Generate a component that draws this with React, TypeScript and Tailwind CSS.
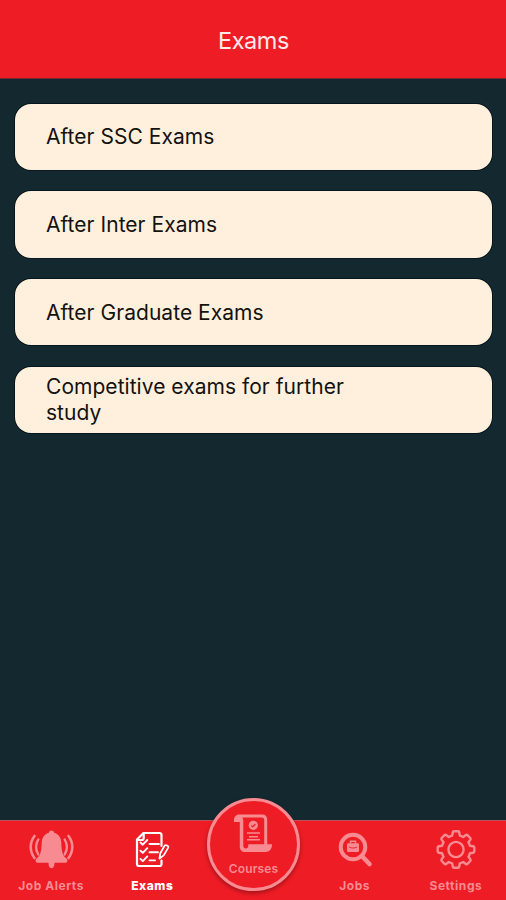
import { useState } from 'react'
import type { ReactNode } from 'react'

const exams = [
  'After SSC Exams',
  'After Inter Exams',
  'After Graduate Exams',
  'Competitive exams for further study',
]

function BellIcon() {
  return (
    <svg width="52" height="44" viewBox="0 0 52 44" fill="none">
      <path
        d="M26.500 3.500c1.500 0 2.300.8 2.600 2.200 4.700 1.300 7 5 7.200 10.100.3 8.200 1 12.800 5.100 15.800 1.600 1.300 1.300 4.200-.9 4.200h-28c-2.200 0-2.500-2.900-.9-4.200 4.100-3 4.800-7.600 5.100-15.800.2-5.100 2.500-8.800 7.200-10.100.3-1.400 1.100-2.200 2.600-2.200Z"
        fill="currentColor"
      />
      <path d="M23.500 35h6c0 4-.8 6.200-3 6.200s-3-2.200-3-6.200Z" fill="currentColor" />
      <path
        d="M9.500 9c-5 6.500-5 15.500 0 22M43.500 9c5 6.500 5 15.500 0 22"
        stroke="currentColor"
        strokeWidth="2.600"
        strokeLinecap="round"
      />
      <path
        d="M13.300 12.500c-2.800 4.700-2.800 10.300 0 15M39.700 12.500c2.800 4.700 2.800 10.300 0 15"
        stroke="currentColor"
        strokeWidth="2.400"
        strokeLinecap="round"
      />
    </svg>
  )
}

function ExamIcon() {
  return (
    <svg
      width="52"
      height="44"
      viewBox="0 0 52 44"
      fill="none"
      stroke="currentColor"
      strokeWidth="2.200"
      strokeLinecap="round"
      strokeLinejoin="round"
    >
      <path d="M35.500 19V8a2 2 0 0 0-2-2H17.500L11 12.500V37a2 2 0 0 0 2 2h20.500a2 2 0 0 0 2-2v-3.500" />
      <path d="M11 13h4.700c1.200 0 2-.8 2-2V6" />
      <path d="m14.500 15.500 2.300 2.200 4.500-4.700M14.500 23.700l2.300 2.200 4.500-4.700M14.500 31.900l2.300 2.200 4.500-4.700" strokeWidth="1.900" />
      <path d="M23.500 17H33M23.500 25.200H32M23.500 33.400H29" strokeWidth="1.900" />
      <path d="m33.500 31.500.8-5.300 4.200-7.300c1.100-1.800 4.600.1 3.600 2l-4.400 7.500Z" strokeWidth="1.800" />
    </svg>
  )
}

function CourseIcon() {
  return (
    <svg width="46" height="44" viewBox="0 0 46 44" fill="none">
      <path
        d="M4 14V12.500C4 9 5.800 6.500 9.300 6.500H32c3.300 0 5.200 1.900 5.200 5.200V37h-3V12c0-1.700-.8-2.500-2.500-2.500H12.200c.8 1 1.100 2.200 1.100 3.700V37.200c0 2.300 1 3.300 2.500 3.300s2.500-1 2.500-3V36.300H42c0 4.800-2.400 7.700-6.500 7.700H15c-3.300 0-5.200-2-5.200-5.500V14Z"
        fill="currentColor"
      />
      <circle cx="23.300" cy="17.300" r="4.600" fill="currentColor" />
      <path d="m21.300 17.300 1.500 1.500 2.600-2.800" stroke="#ee1c25" strokeWidth="1.200" />
      <path d="M17 25h13M19 28.700h9M17 31.700h13" stroke="currentColor" strokeWidth="1.500" />
    </svg>
  )
}

function JobIcon() {
  return (
    <svg width="52" height="44" viewBox="0 0 52 44" fill="none">
      <circle cx="25" cy="20" r="12.300" stroke="currentColor" strokeWidth="4" />
      <path d="m33.800 29 7.700 8" stroke="currentColor" strokeWidth="4.600" strokeLinecap="round" />
      <rect x="19" y="16.200" width="12" height="8.800" rx="1.200" fill="currentColor" />
      <path d="M22.500 16.200v-2h5v2" stroke="currentColor" strokeWidth="1.500" />
      <path d="M21 20c2.500 1.400 5.500 1.400 8 0" stroke="#ee1c25" strokeWidth=".9" />
    </svg>
  )
}

function GearIcon() {
  return (
    <svg
      width="52"
      height="44"
      viewBox="0 0 52 44"
      fill="none"
      stroke="currentColor"
      strokeWidth="2.400"
      strokeLinejoin="round"
    >
      <g transform="translate(27 22.500)">
        <circle r="7.600" />
        <path d="M-3.200-17.200Q-3-18.300-2-18.300H2Q3-18.300 3.200-17.200L3.800-13.900Q5.800-13.300 7.200-12.500L9.900-14.400Q10.800-15 11.500-14.300L14.300-11.500Q15-10.800 14.400-9.900L12.500-7.200Q13.300-5.800 13.900-3.800L17.200-3.200Q18.300-3 18.300-2V2Q18.300 3 17.200 3.200L13.900 3.800Q13.300 5.800 12.500 7.200L14.400 9.900Q15 10.800 14.300 11.500L11.500 14.300Q10.800 15 9.900 14.400L7.200 12.500Q5.800 13.300 3.800 13.900L3.200 17.200Q3 18.300 2 18.300H-2Q-3 18.300-3.200 17.200L-3.800 13.900Q-5.800 13.300-7.200 12.500L-9.900 14.400Q-10.800 15-11.500 14.300L-14.300 11.500Q-15 10.800-14.400 9.900L-12.500 7.200Q-13.300 5.800-13.900 3.800L-17.200 3.200Q-18.300 3-18.300 2V-2Q-18.300-3-17.200-3.200L-13.900-3.800Q-13.300-5.800-12.500-7.200L-14.400-9.900Q-15-10.800-14.300-11.500L-11.500-14.300Q-10.800-15-9.900-14.400L-7.200-12.500Q-5.800-13.300-3.800-13.900Z" />
      </g>
    </svg>
  )
}

interface TabProps {
  label: string
  active: boolean
  onClick: () => void
  children: ReactNode
}

function Tab({ label, active, onClick, children }: TabProps) {
  return (
    <button
      type="button"
      onClick={onClick}
      className={`flex flex-col items-center pt-[6px] ${active ? 'text-white' : 'text-[#f78b91]'}`}
    >
      {children}
      <span
        className={`mt-[7px] pl-[1px] text-[12px] leading-[16px] tracking-[0.55px] ${
          active ? 'font-extrabold tracking-[0.2px]' : 'font-bold tracking-[0.55px]'
        }`}
      >
        {label}
      </span>
    </button>
  )
}

export default function App() {
  const [tab, setTab] = useState('Exams')

  return (
    <div className="flex h-[900px] w-[506px] flex-col overflow-hidden bg-[#14292f] font-['Inter',sans-serif]">
      <header className="flex h-[79px] shrink-0 items-center justify-center border-b border-[#7c252d] bg-[#ee1c25] pt-[3px] pl-[1px]">
        <h1 className="text-[23.500px] leading-7 tracking-[-0.4px] text-[#ffe9e9]">Exams</h1>
      </header>

      <main className="flex flex-1 flex-col gap-[21.200px] pt-[24.500px] pr-[14px] pl-[15px]">
        {exams.map((exam) => (
          <button
            key={exam}
            type="button"
            className="flex h-[66.500px] shrink-0 items-center rounded-[16px] bg-[#fff0dd] pl-[31px] text-left ring-1 ring-[#07151e]"
          >
            <span className="w-[325px] pt-px text-[21px] leading-[26px] tracking-[0.04px] text-[#14120f]">{exam}</span>
          </button>
        ))}
      </main>

      <nav className="grid h-[80px] shrink-0 grid-cols-5 border-t border-[#bb525a] bg-[#ee1c25]">
        <Tab label="Job Alerts" active={tab === 'Job Alerts'} onClick={() => setTab('Job Alerts')}>
          <BellIcon />
        </Tab>
        <Tab label="Exams" active={tab === 'Exams'} onClick={() => setTab('Exams')}>
          <ExamIcon />
        </Tab>
        <div className="relative">
          <button
            type="button"
            onClick={() => setTab('Courses')}
            className={`absolute -top-[23px] left-[4.600px] flex h-[93px] w-[93px] flex-col items-center rounded-full border-[3px] border-[#f78b91] bg-[#ee1c25] pt-[7px] shadow-[0_2px_4px_rgba(0,0,0,0.35)] ${
              tab === 'Courses' ? 'text-white' : 'text-[#f78b91]'
            }`}
          >
            <CourseIcon />
            <span className="mt-[9px] text-[12px] leading-[16px] font-semibold tracking-[0.1px]">Courses</span>
          </button>
        </div>
        <Tab label="Jobs" active={tab === 'Jobs'} onClick={() => setTab('Jobs')}>
          <JobIcon />
        </Tab>
        <Tab label="Settings" active={tab === 'Settings'} onClick={() => setTab('Settings')}>
          <GearIcon />
        </Tab>
      </nav>
    </div>
  )
}
